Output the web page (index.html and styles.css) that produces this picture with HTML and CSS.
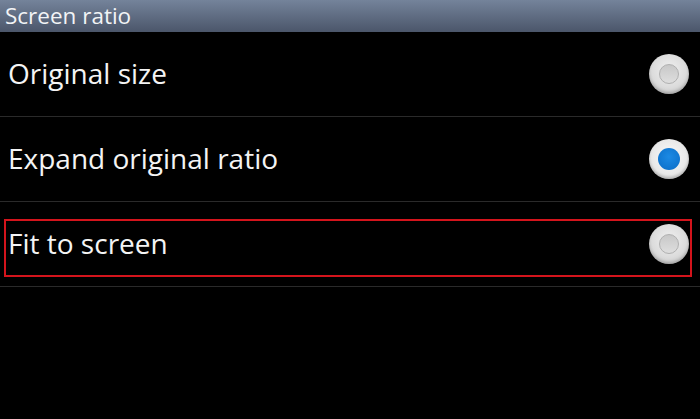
FILE: index.html
```html
<!DOCTYPE html>
<html>
<head>
    <meta charset="UTF-8">
    <title>Screen ratio</title>
    <link rel="stylesheet" href="styles.css">
</head>
<body>
    <div class="title-bar">Screen ratio</div>

    <div class="option">
        <span class="label">Original size</span>
        <span class="radio"></span>
    </div>

    <div class="option">
        <span class="label">Expand original ratio</span>
        <span class="radio checked"></span>
    </div>

    <div class="option marked">
        <span class="label">Fit to screen</span>
        <span class="radio"></span>
        <span class="mark"></span>
    </div>
</body>
</html>
```

FILE: styles.css
```css
body {
    margin: 0;
    background: #000;
    font-family: "Open Sans", "Noto Sans", "DejaVu Sans", sans-serif;
    color: #f4f4f4;
    width: 700px;
    height: 419px;
    overflow: hidden;
}

.title-bar {
    height: 32px;
    line-height: 31px;
    padding-left: 5px;
    font-size: 22.5px;
    color: #f2f4f6;
    background: linear-gradient(to bottom, #74839a, #4b566a);
}

.option {
    position: relative;
    height: 84px;
    display: flex;
    align-items: center;
    justify-content: space-between;
    padding: 0 11px 0 8px;
    border-bottom: 1px solid #2a2a2a;
}

.label {
    font-size: 28px;
    line-height: 1;
    margin-top: -2px;
}

.radio {
    width: 40px;
    height: 40px;
    border-radius: 50%;
    background: radial-gradient(circle at 50% 40%, #f0f0f0 0%, #dcdcdc 55%, #bcbcbc 100%);
    box-shadow: inset 0 -2px 3px rgba(0, 0, 0, 0.2);
    display: flex;
    align-items: center;
    justify-content: center;
}

.radio::after {
    content: "";
    width: 18px;
    height: 18px;
    border-radius: 50%;
    border: 1px solid #b0b0b0;
    background: linear-gradient(to bottom, #c8c8c8, #dedede);
}

.radio.checked {
    background: radial-gradient(circle at 50% 45%, #fafafa 0%, #e8e8e8 60%, #c8c8c8 100%);
}

.radio.checked::after {
    width: 22px;
    height: 22px;
    border: none;
    background: radial-gradient(circle at 50% 40%, #1c8ae4, #0a6cc6);
}

.mark {
    position: absolute;
    left: 4px;
    right: 8px;
    top: 17px;
    bottom: 9px;
    border: 2px solid #d4141c;
}
```
